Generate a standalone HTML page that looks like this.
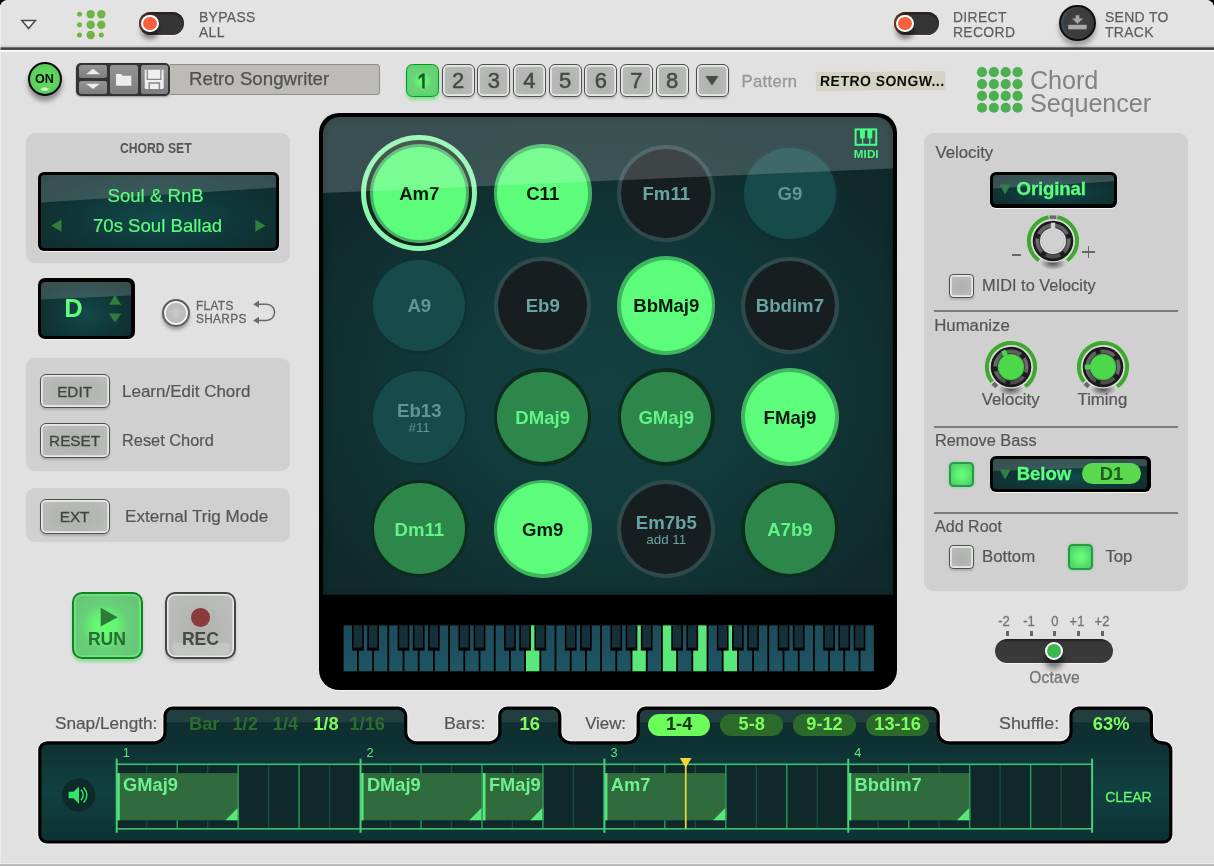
<!DOCTYPE html>
<html>
<head>
<meta charset="utf-8">
<title>Chord Sequencer</title>
<style>
*{box-sizing:border-box;margin:0;padding:0}
html,body{width:1214px;height:866px;overflow:hidden;background:#000;font-family:"Liberation Sans",sans-serif;}
#win{will-change:transform;transform:translateZ(0);position:absolute;left:0;top:0;width:1214px;height:866px;background:#e1e1e1;border-radius:8px 8px 0 0;overflow:hidden}
.a{position:absolute}
.t{position:absolute;line-height:1;white-space:nowrap;transform-origin:0 50%}
.b{font-weight:bold}
/* top bar */
#topbar{left:0;top:0;width:1214px;height:48px;background:linear-gradient(#e3e3e3 0,#e2e2e2 93.5%,#c9c9c9 97.5%,#a0a0a0 100%)}
#topline{left:0;top:47.3px;width:1214px;height:2.7px;background:linear-gradient(#8a8a8a,#464646 45%,#454545 80%,#555)}
#topline2{left:0;top:50px;width:1214px;height:2.2px;background:linear-gradient(#fff,#fbfbfb 70%,#ececec)}
.tog{width:45px;height:23px;border-radius:12px;background:#353535;box-shadow:0 1px 0 #f5f5f5,inset 2.5px 0 2.5px rgba(190,70,40,.45),inset 0 2px 2px rgba(0,0,0,.5)}
.togk{width:17.6px;height:17.6px;border-radius:50%;background:#f4623f;border:2.2px solid #fff;box-shadow:0 7px 5px rgba(0,0,0,.45)}
.toptx{font-size:14.8px;color:#5e5e5e;-webkit-text-stroke:.25px #5e5e5e;letter-spacing:.35px;line-height:15.2px;transform:scaleX(.94);margin-top:-.5px}
/* gray boxes */
.box{background:#d0d0d0;border-radius:9px}
.lbl{font-size:16.8px;color:#555;margin-top:1.3px;-webkit-text-stroke:.2px #555}
/* light buttons */
.btn{border:1.8px solid #4e4e4e;border-radius:6px;background:radial-gradient(ellipse at 50% 55%,#aeb2ad 0,#b7bab6 70%,#bcbfbb 100%);box-shadow:inset 0 0 0 1.7px #e9e9e9,0 2px 2px rgba(0,0,0,.16)}
.btn span{position:absolute;left:-1px;right:0;text-align:center;color:#434343;line-height:1;-webkit-text-stroke:.3px #434343}
/* LCD displays */
.lcd{background:#000;border-radius:6px;box-shadow:0 1px 0 #f4f4f4}
.lcd .in{position:absolute;border-radius:3px;overflow:hidden;background:radial-gradient(ellipse at 50% 60%,#12494a 0,#103536 55%,#0f2a2b 100%)}
.gloss{position:absolute;left:0;top:0;width:100%;height:100%;background:rgba(255,255,255,.17)}
.g{color:#5dfc7c}
.sn{font-size:18.3px;color:#2b6e2c;margin-top:-.4px}
.gbtn{border-radius:4.5px;border:2.3px solid #28994a;background:radial-gradient(circle at 50% 50%,#6aff78 0,#5ff273 35%,#52d669 75%,#4ed066 100%);box-shadow:0 0 2.5px rgba(70,220,100,.8)}
.pb{border-radius:2.5px;background:linear-gradient(#949494,#7e7e7e)}
</style>
</head>
<body>
<div id="win">
<!-- TOPBAR -->
<div class="a" id="topbar"></div>
<div class="a" id="topline"></div>
<div class="a" id="topline2"></div>
<svg class="a" style="left:20px;top:19px" width="18" height="12" viewBox="0 0 18 12"><path d="M1.8 1.5 L15.4 1.5 L8.6 9.6 Z" fill="#f4f4f4" stroke="#4a4a4a" stroke-width="1.5" stroke-linejoin="miter"/></svg>
<svg class="a" style="left:74px;top:8px" width="34" height="34" viewBox="0 0 34 34" id="toplogo">
<g fill="#6fb544">
<circle cx="5.5" cy="6.3" r="2.5"/><circle cx="16.7" cy="6.3" r="4.2"/><circle cx="27.3" cy="6.3" r="4.2"/>
<circle cx="5.5" cy="16.7" r="2.5"/><circle cx="16.7" cy="16.7" r="4.2"/><circle cx="27.3" cy="16.7" r="4.2"/>
<circle cx="5.5" cy="27" r="2.5"/><circle cx="16.7" cy="27" r="4.2"/><circle cx="27.3" cy="27" r="2.5"/>
</g></svg>
<div class="a tog" style="left:139px;top:11.5px"></div>
<div class="a togk" style="left:141.4px;top:14.7px"></div>
<div class="t toptx" style="left:199px;top:10.4px">BYPASS<br>ALL</div>
<div class="a tog" style="left:894px;top:11.5px"></div>
<div class="a togk" style="left:896.4px;top:14.7px"></div>
<div class="t toptx" style="left:953px;top:10.4px">DIRECT<br>RECORD</div>
<div class="a" style="left:1059.4px;top:4.6px;width:36.2px;height:36.2px;border-radius:50%;background:radial-gradient(circle at 50% 45%,#454545 0,#3a3a3a 60%,#333 100%);border:2.4px solid #0e0e0e;box-shadow:inset 2px 0 3px rgba(90,120,170,.38),0 5px 5px rgba(0,0,0,.3)"></div>
<svg class="a" style="left:1066px;top:13px" width="24" height="18" viewBox="0 0 24 18"><path d="M9.7 2.2h3.6v3.3h3.7l-5.5 5.2-5.5-5.2h3.7z" fill="#a9a9a9"/><rect x="2.2" y="11.8" width="18.5" height="4.5" fill="#a9a9a9"/></svg>
<div class="t toptx" style="left:1105.4px;top:10.4px">SEND TO<br>TRACK</div>

<div class="a" style="left:0;top:0;width:1.2px;height:866px;background:rgba(255,255,255,.45)"></div>
<!--HEADER-->
<div class="a" style="left:27.8px;top:61.7px;width:34.1px;height:34.1px;border-radius:50%;border:2.5px solid #080808;background:radial-gradient(ellipse 5px 2.3px at 49% 84%,rgba(255,255,255,.85) 0,rgba(255,255,255,.6) 60%,rgba(255,255,255,0) 100%),radial-gradient(circle at 50% 50%,#60da60 0,#5cd45c 55%,#52c452 78%,#49b449 100%);box-shadow:0 5px 5px rgba(0,0,0,.38)"></div>
<div class="t b" style="left:35.2px;top:72.3px;font-size:13.6px;color:#080808;transform:scaleX(.925)">ON</div>
<div class="a" style="left:76.3px;top:63.1px;width:94px;height:32.8px;border-radius:5px;background:#333;box-shadow:0 1px 2px rgba(0,0,0,.35)"></div>
<div class="a pb" style="left:79px;top:65.3px;width:27.8px;height:12.8px"></div>
<div class="a pb" style="left:79px;top:80.8px;width:27.8px;height:12.8px"></div>
<div class="a pb" style="left:110px;top:65.3px;width:28px;height:28.3px"></div>
<div class="a pb" style="left:140.8px;top:65.3px;width:27.6px;height:28.3px"></div>
<svg class="a" style="left:76px;top:63px" width="94" height="33" viewBox="0 0 94 33">
<path d="M10 11.2 L17 5.8 L24 11.2 Z" fill="#ececec"/><path d="M10 20.8 L24 20.8 L17 26 Z" fill="#ececec"/>
<path d="M40 11 h5.2 l1.6 1.8 h8.5 v10 h-15.3 z" fill="#ececec"/>
<path d="M68.7 6.8 H87.7 V24.4 Q87.7 26.1 86 26.1 H70.4 Q68.7 26.1 68.7 24.4 Z" fill="#efefef"/><path d="M71.3 6.6 V16.4 H84.9 V6.6" fill="none" stroke="#888" stroke-width="1.3"/><path d="M73.2 26.3 V20 H83.4 V26.3" fill="none" stroke="#888" stroke-width="1.5"/>
</svg>
<div class="a" style="left:169.8px;top:63.7px;width:210.2px;height:31.4px;background:#bcbbb7;border:1.2px solid #8e8e8c;border-left:none;border-radius:0 3.5px 3.5px 0"></div>
<div class="t" style="left:189px;top:70.1px;font-size:18.7px;color:#515151;-webkit-text-stroke:.25px #515151">Retro Songwriter</div>
<div class="a" style="left:405.8px;top:63.5px;width:33.2px;height:33.5px;border-radius:6.5px;border:1.9px solid #1e8535;background:radial-gradient(circle at 50% 52%,#66ff72 0,#63f86f 18%,#68d578 42%,#6bc67a 100%);box-shadow:inset 0 0 0 1.6px #45e262,0 3px 3px rgba(80,230,100,.65)"></div>
<svg class="a" style="left:414px;top:70px" width="16" height="20" viewBox="0 0 16 20"><path d="M8.1 3.6 H10.7 V18.4 H8.1 V6.8 L4.6 9.4 V6.4 Z" fill="#1d5a2a"/></svg>
<div class="a btn" style="left:441.65px;top:63.6px;width:33px;height:33.4px"></div>
<div class="t" style="left:441.65px;width:33px;text-align:center;top:69.8px;font-size:22px;color:#484848;-webkit-text-stroke:.45px #444">2</div>
<div class="a btn" style="left:477.3px;top:63.6px;width:33px;height:33.4px"></div>
<div class="t" style="left:477.3px;width:33px;text-align:center;top:69.8px;font-size:22px;color:#484848;-webkit-text-stroke:.45px #444">3</div>
<div class="a btn" style="left:512.95px;top:63.6px;width:33px;height:33.4px"></div>
<div class="t" style="left:512.95px;width:33px;text-align:center;top:69.8px;font-size:22px;color:#484848;-webkit-text-stroke:.45px #444">4</div>
<div class="a btn" style="left:548.6px;top:63.6px;width:33px;height:33.4px"></div>
<div class="t" style="left:548.6px;width:33px;text-align:center;top:69.8px;font-size:22px;color:#484848;-webkit-text-stroke:.45px #444">5</div>
<div class="a btn" style="left:584.25px;top:63.6px;width:33px;height:33.4px"></div>
<div class="t" style="left:584.25px;width:33px;text-align:center;top:69.8px;font-size:22px;color:#484848;-webkit-text-stroke:.45px #444">6</div>
<div class="a btn" style="left:619.9px;top:63.6px;width:33px;height:33.4px"></div>
<div class="t" style="left:619.9px;width:33px;text-align:center;top:69.8px;font-size:22px;color:#484848;-webkit-text-stroke:.45px #444">7</div>
<div class="a btn" style="left:655.55px;top:63.6px;width:33px;height:33.4px"></div>
<div class="t" style="left:655.55px;width:33px;text-align:center;top:69.8px;font-size:22px;color:#484848;-webkit-text-stroke:.45px #444">8</div>
<div class="a btn" style="left:695.8px;top:63.6px;width:32.8px;height:33.4px"></div>
<svg class="a" style="left:703px;top:75px" width="18" height="12" viewBox="0 0 18 12"><path d="M2.4 1 L15.6 1 L9 10.6 Z" fill="#4a4a4a"/></svg>
<div class="t" style="left:741.5px;top:73.8px;font-size:16.6px;color:#979797;letter-spacing:.35px;-webkit-text-stroke:.3px #979797">Pattern</div>
<div class="a" style="left:816.4px;top:71.6px;width:129.4px;height:18px;background:#d5d3c1;transform:rotate(-.4deg);box-shadow:0 0 1px #c8c6b4"></div>
<div class="t b" id="tape" style="left:819.6px;top:74.1px;font-size:14.6px;color:#0b0b0b;letter-spacing:.5px;transform:scaleX(.958) skewX(-3deg)">RETRO SONGW...</div>
<svg class="a" style="left:975px;top:65px" width="50" height="50" viewBox="0 0 50 50"><g fill="#4caf50">
<circle cx="7.00" cy="7.20" r="5.1"/><circle cx="18.85" cy="7.20" r="5.1"/><circle cx="30.70" cy="7.20" r="5.1"/><circle cx="42.55" cy="7.20" r="5.1"/><circle cx="7.00" cy="19.05" r="5.1"/><circle cx="18.85" cy="19.05" r="5.1"/><circle cx="30.70" cy="19.05" r="5.1"/><circle cx="42.55" cy="19.05" r="5.1"/><circle cx="7.00" cy="30.90" r="5.1"/><circle cx="18.85" cy="30.90" r="5.1"/><circle cx="30.70" cy="30.90" r="5.1"/><circle cx="42.55" cy="30.90" r="5.1"/><circle cx="7.00" cy="42.75" r="5.1"/><circle cx="18.85" cy="42.75" r="5.1"/><circle cx="30.70" cy="42.75" r="5.1"/><circle cx="42.55" cy="42.75" r="5.1"/></g></svg>
<div class="t" style="left:1030px;top:68.6px;font-size:25.2px;color:#828282;line-height:23.6px;letter-spacing:-.1px">Chord<br>Sequencer</div>
<!--LEFT-->
<div class="a box" style="left:25.8px;top:133px;width:264.6px;height:130px"></div>
<div class="t b" style="left:119.6px;top:141.3px;font-size:14px;color:#555;transform:scaleX(.868)">CHORD SET</div>
<div class="a lcd" style="left:38px;top:171.6px;width:240.8px;height:79.8px"><div class="in" style="left:3.2px;top:3.2px;right:3.2px;bottom:3.2px"><svg class="a" style="left:0;top:0" width="235" height="74" viewBox="0 0 235 74"><path d="M0 0 H235 V12.5 L0 27.6 Z" fill="#fff" fill-opacity=".17"/></svg></div></div>
<div class="t g" style="left:35.2px;width:240.8px;text-align:center;top:187.2px;font-size:18.6px;-webkit-text-stroke:.2px #5dfc7c">Soul &amp; RnB</div>
<div class="t g" style="left:37.2px;width:240.8px;text-align:center;top:217.2px;font-size:18.6px;-webkit-text-stroke:.2px #5dfc7c">70s Soul Ballad</div>
<svg class="a" style="left:50px;top:218px" width="14" height="16" viewBox="0 0 14 16"><path d="M11.5 1.6 V13.8 L1.2 7.7 Z" fill="#2f7f3d"/></svg>
<svg class="a" style="left:253px;top:218px" width="14" height="16" viewBox="0 0 14 16"><path d="M2.3 1.6 V13.8 L12.6 7.7 Z" fill="#2f7f3d"/></svg>

<div class="a lcd" style="left:38px;top:278.4px;width:96.6px;height:61px;border-radius:7px"><div class="in" style="left:3.4px;top:3.4px;right:3.4px;bottom:3.4px;border-radius:4px"><svg class="a" style="left:0;top:0" width="90" height="55" viewBox="0 0 90 55"><path d="M0 0 H90 V13.6 L0 17.4 Z" fill="#fff" fill-opacity=".17"/></svg></div></div>
<div class="t b g" style="left:64.2px;top:296px;font-size:25.6px">D</div>
<svg class="a" style="left:107px;top:294px" width="16" height="32" viewBox="0 0 16 32"><path d="M1.8 10.8 H14.2 L8 1 Z" fill="#2f7f3d"/><path d="M1.8 19.6 H14.2 L8 28.6 Z" fill="#2f7f3d"/></svg>
<div class="a" style="left:162px;top:298.5px;width:28.4px;height:28.4px;border-radius:50%;border:2px solid #5e5e5e;background:radial-gradient(circle at 50% 50%,#cfd0ce 0,#bcbfbb 35%,#b6b9b5 100%);box-shadow:inset 0 0 0 1.8px #f4f4f4,0 3px 3px rgba(0,0,0,.28)"></div>
<div class="t" style="left:196.2px;top:299.9px;font-size:12.6px;line-height:13.4px;color:#636363;letter-spacing:.35px;transform:scaleX(.94);-webkit-text-stroke:.3px #636363">FLATS<br>SHARPS</div>
<svg class="a" style="left:252px;top:298px" width="26" height="28" viewBox="0 0 26 28"><g fill="none" stroke="#6a6a6a" stroke-width="1.5"><path d="M3 6.2 H14.5 A8.1 8.1 0 0 1 14.5 22.4 H3"/></g><path d="M1.2 6.2 L7 2.6 V9.8 Z" fill="#6a6a6a"/><path d="M1.2 22.4 L7 18.8 V26 Z" fill="#6a6a6a"/></svg>

<div class="a box" style="left:25.8px;top:358.1px;width:264.6px;height:113.2px"></div>
<div class="a btn" style="left:40.1px;top:373.8px;width:70px;height:34.5px"><span style="top:9.1px;font-size:15.3px">EDIT</span></div>
<div class="t lbl" style="left:122px;top:382.8px;transform:scaleX(1.012)">Learn/Edit Chord</div>
<div class="a btn" style="left:40.1px;top:423.1px;width:70px;height:34.5px"><span style="top:9.1px;font-size:15.3px">RESET</span></div>
<div class="t lbl" style="left:122px;top:431.4px;transform:scaleX(.975)">Reset Chord</div>
<div class="a box" style="left:25.8px;top:488.1px;width:264.6px;height:54.2px"></div>
<div class="a btn" style="left:40.1px;top:499.1px;width:70px;height:34.5px"><span style="top:9.1px;font-size:15.3px">EXT</span></div>
<div class="t lbl" style="left:124.5px;top:507.4px;transform:scaleX(1.017)">External Trig Mode</div>

<div class="a" style="left:72.1px;top:591.8px;width:71px;height:67.4px;border-radius:10px;border:2px solid #1f7a2e;background:radial-gradient(circle at 46% 52%,#66ff72 0,#64f772 22%,#68cf78 48%,#6bbf7a 100%);box-shadow:inset 0 0 0 1.8px #5cf274,0 3px 3px rgba(90,220,110,.6)"></div>
<svg class="a" style="left:98px;top:605px" width="24" height="24" viewBox="0 0 24 24"><path d="M2.7 2.8 L19.6 12.2 L2.7 21.5 Z" fill="#2c7b3b"/></svg>
<div class="t b" style="left:87.9px;top:630.8px;font-size:17.6px;color:#2a6a37">RUN</div>
<div class="a" style="left:165.4px;top:591.8px;width:71px;height:67.4px;border-radius:10px;border:2px solid #464646;background:radial-gradient(circle at 48% 55%,#aeb1ad 0,#b6b9b5 45%,#bcbfbb 100%);box-shadow:inset 0 0 0 1.6px #e9e9e9,0 3px 3px rgba(0,0,0,.16)"></div>
<div class="a" style="left:171.5px;top:643px;width:58.5px;height:11.5px;border-radius:4px 4px 7px 7px;background:rgba(255,255,255,.18)"></div>
<div class="a" style="left:191.2px;top:608.1px;width:18.6px;height:18.6px;border-radius:50%;background:#8b3b3c"></div>
<div class="t b" style="left:181.9px;top:630.8px;font-size:17.6px;color:#484848">REC</div>
<!--PADS-->
<div class="a" style="left:319px;top:112.5px;width:577.5px;height:577.1px;border-radius:20px;background:#000;box-shadow:0 1px 0 #f6f6f6"></div>
<div class="a" id="padbg" style="left:322.5px;top:116.7px;width:570.9px;height:478.3px;border-radius:17px 17px 0 0;overflow:hidden;background:radial-gradient(ellipse 60% 58% at 50% 57%,#13413f 0,#123b3b 40%,#102a2c 100%);box-shadow:inset 0 0 5px 1px #0a1f21">
<div class="a" style="left:0;top:0">
<div class="a" style="left:38.8px;top:18.8px;width:116.0px;height:116.0px;border-radius:50%;background:#8df4b1"></div>
<div class="a" style="left:43.8px;top:23.8px;width:106.0px;height:106.0px;border-radius:50%;background:linear-gradient(#1d3a28,#0c2114)"></div>
<div class="a" style="left:47.0px;top:27.0px;width:99.6px;height:99.6px;border-radius:50%;background:#47b068"></div>
<div class="a" style="left:50.4px;top:30.4px;width:92.8px;height:92.8px;border-radius:50%;background:#5dfd7c"></div>
<div class="t b" style="left:36.8px;width:120px;text-align:center;top:68.6px;font-size:18.6px;color:#0d1a10">Am7</div>
<div class="a" style="left:171.1px;top:27.7px;width:98.2px;height:98.2px;border-radius:50%;background:#3eb75f"></div>
<div class="a" style="left:174.8px;top:31.4px;width:90.8px;height:90.8px;border-radius:50%;background:#5dfd7c"></div>
<div class="t b" style="left:160.2px;width:120px;text-align:center;top:68.6px;font-size:18.6px;color:#0d1a10">C11</div>
<div class="a" style="left:294.9px;top:28.0px;width:97.6px;height:97.6px;border-radius:50%;background:#2f4a4c"></div>
<div class="a" style="left:298.9px;top:32.0px;width:89.6px;height:89.6px;border-radius:50%;background:#161e20"></div>
<div class="t b" style="left:283.8px;width:120px;text-align:center;top:68.6px;font-size:18.6px;color:#69a3a3">Fm11</div>
<div class="a" style="left:419.2px;top:28.6px;width:96.4px;height:96.4px;border-radius:50%;background:#0f3133"></div>
<div class="a" style="left:421.5px;top:30.9px;width:91.8px;height:91.8px;border-radius:50%;background:#174a4a"></div>
<div class="t b" style="left:407.4px;width:120px;text-align:center;top:68.6px;font-size:18.6px;color:#5e9795">G9</div>
<div class="a" style="left:48.6px;top:140.6px;width:96.4px;height:96.4px;border-radius:50%;background:#0f3133"></div>
<div class="a" style="left:50.9px;top:142.9px;width:91.8px;height:91.8px;border-radius:50%;background:#174a4a"></div>
<div class="t b" style="left:36.8px;width:120px;text-align:center;top:180.6px;font-size:18.6px;color:#5e9795">A9</div>
<div class="a" style="left:171.4px;top:140.0px;width:97.6px;height:97.6px;border-radius:50%;background:#2f4a4c"></div>
<div class="a" style="left:175.4px;top:144.0px;width:89.6px;height:89.6px;border-radius:50%;background:#161e20"></div>
<div class="t b" style="left:160.2px;width:120px;text-align:center;top:180.6px;font-size:18.6px;color:#69a3a3">Eb9</div>
<div class="a" style="left:294.6px;top:139.7px;width:98.2px;height:98.2px;border-radius:50%;background:#3eb75f"></div>
<div class="a" style="left:298.4px;top:143.4px;width:90.8px;height:90.8px;border-radius:50%;background:#5dfd7c"></div>
<div class="t b" style="left:283.8px;width:120px;text-align:center;top:180.6px;font-size:18.6px;color:#0d1a10">BbMaj9</div>
<div class="a" style="left:418.6px;top:140.0px;width:97.6px;height:97.6px;border-radius:50%;background:#2f4a4c"></div>
<div class="a" style="left:422.6px;top:144.0px;width:89.6px;height:89.6px;border-radius:50%;background:#161e20"></div>
<div class="t b" style="left:407.4px;width:120px;text-align:center;top:180.6px;font-size:18.6px;color:#69a3a3">Bbdim7</div>
<div class="a" style="left:48.6px;top:252.2px;width:96.4px;height:96.4px;border-radius:50%;background:#0f3133"></div>
<div class="a" style="left:50.9px;top:254.5px;width:91.8px;height:91.8px;border-radius:50%;background:#174a4a"></div>
<div class="t b" style="left:36.8px;width:120px;text-align:center;top:285.7px;font-size:18.6px;color:#5e9795">Eb13</div>
<div class="t" style="left:36.8px;width:120px;text-align:center;top:304.7px;font-size:13.4px;color:#5e9795">#11</div>
<div class="a" style="left:171.5px;top:251.7px;width:97.4px;height:97.4px;border-radius:50%;background:#0c2c1e"></div>
<div class="a" style="left:174.9px;top:255.1px;width:90.6px;height:90.6px;border-radius:50%;background:#2d864a"></div>
<div class="t b" style="left:160.2px;width:120px;text-align:center;top:292.2px;font-size:18.6px;color:#62f585">DMaj9</div>
<div class="a" style="left:295.1px;top:251.7px;width:97.4px;height:97.4px;border-radius:50%;background:#0c2c1e"></div>
<div class="a" style="left:298.4px;top:255.1px;width:90.6px;height:90.6px;border-radius:50%;background:#2d864a"></div>
<div class="t b" style="left:283.8px;width:120px;text-align:center;top:292.2px;font-size:18.6px;color:#62f585">GMaj9</div>
<div class="a" style="left:418.3px;top:251.3px;width:98.2px;height:98.2px;border-radius:50%;background:#3eb75f"></div>
<div class="a" style="left:422.0px;top:255.0px;width:90.8px;height:90.8px;border-radius:50%;background:#5dfd7c"></div>
<div class="t b" style="left:407.4px;width:120px;text-align:center;top:292.2px;font-size:18.6px;color:#0d1a10">FMaj9</div>
<div class="a" style="left:48.1px;top:363.4px;width:97.4px;height:97.4px;border-radius:50%;background:#0c2c1e"></div>
<div class="a" style="left:51.5px;top:366.8px;width:90.6px;height:90.6px;border-radius:50%;background:#2d864a"></div>
<div class="t b" style="left:36.8px;width:120px;text-align:center;top:403.9px;font-size:18.6px;color:#62f585">Dm11</div>
<div class="a" style="left:171.1px;top:363.0px;width:98.2px;height:98.2px;border-radius:50%;background:#3eb75f"></div>
<div class="a" style="left:174.8px;top:366.7px;width:90.8px;height:90.8px;border-radius:50%;background:#5dfd7c"></div>
<div class="t b" style="left:160.2px;width:120px;text-align:center;top:403.9px;font-size:18.6px;color:#0d1a10">Gm9</div>
<div class="a" style="left:294.9px;top:363.3px;width:97.6px;height:97.6px;border-radius:50%;background:#2f4a4c"></div>
<div class="a" style="left:298.9px;top:367.3px;width:89.6px;height:89.6px;border-radius:50%;background:#161e20"></div>
<div class="t b" style="left:283.8px;width:120px;text-align:center;top:397.4px;font-size:18.6px;color:#69a3a3">Em7b5</div>
<div class="t" style="left:283.8px;width:120px;text-align:center;top:416.4px;font-size:13.4px;color:#69a3a3">add 11</div>
<div class="a" style="left:418.7px;top:363.4px;width:97.4px;height:97.4px;border-radius:50%;background:#0c2c1e"></div>
<div class="a" style="left:422.1px;top:366.8px;width:90.6px;height:90.6px;border-radius:50%;background:#2d864a"></div>
<div class="t b" style="left:407.4px;width:120px;text-align:center;top:403.9px;font-size:18.6px;color:#62f585">A7b9</div>
</div>
<svg class="a" style="left:0;top:0" width="571" height="481" viewBox="0 0 571 481"><path d="M0 0 H571 V51.4 L0 76 Z" fill="#fff" fill-opacity=".175"/></svg>
</div>
<svg class="a" style="left:853px;top:127px" width="26" height="20" viewBox="0 0 26 20"><rect x="2.6" y="2.4" width="20.6" height="15.4" fill="none" stroke="#46fd86" stroke-width="2"/><rect x="7" y="2.4" width="4.9" height="9" fill="#46fd86"/><rect x="14.4" y="2.4" width="4.9" height="9" fill="#46fd86"/><rect x="8.9" y="11" width="1.3" height="6.5" fill="#46fd86"/><rect x="16.2" y="11" width="1.3" height="6.5" fill="#46fd86"/></svg>
<div class="t b" style="left:853.8px;top:148.1px;font-size:11.6px;color:#46fd86;letter-spacing:.1px">MIDI</div>
<svg class="a" style="left:0;top:600px" width="1214" height="90" viewBox="0 600 1214 90"><defs><linearGradient id="wk" x1="0" y1="0" x2="0" y2="1"><stop offset="0" stop-color="#1d4b5a"/><stop offset="1" stop-color="#1f5563"/></linearGradient></defs>
<rect x="343.60" y="625.4" width="13.40" height="45.9" fill="url(#wk)"/><rect x="358.80" y="625.4" width="13.40" height="45.9" fill="url(#wk)"/><rect x="374.00" y="625.4" width="13.40" height="45.9" fill="url(#wk)"/><rect x="389.20" y="625.4" width="13.40" height="45.9" fill="url(#wk)"/><rect x="404.40" y="625.4" width="13.40" height="45.9" fill="url(#wk)"/><rect x="419.60" y="625.4" width="13.40" height="45.9" fill="url(#wk)"/><rect x="434.80" y="625.4" width="13.40" height="45.9" fill="url(#wk)"/><rect x="450.00" y="625.4" width="13.40" height="45.9" fill="url(#wk)"/><rect x="465.20" y="625.4" width="13.40" height="45.9" fill="url(#wk)"/><rect x="480.40" y="625.4" width="13.40" height="45.9" fill="url(#wk)"/><rect x="495.60" y="625.4" width="13.40" height="45.9" fill="url(#wk)"/><rect x="510.80" y="625.4" width="13.40" height="45.9" fill="url(#wk)"/><rect x="526.00" y="625.4" width="13.40" height="45.9" fill="#5be87a"/><rect x="541.20" y="625.4" width="13.40" height="45.9" fill="url(#wk)"/><rect x="556.40" y="625.4" width="13.40" height="45.9" fill="url(#wk)"/><rect x="571.60" y="625.4" width="13.40" height="45.9" fill="url(#wk)"/><rect x="586.80" y="625.4" width="13.40" height="45.9" fill="url(#wk)"/><rect x="602.00" y="625.4" width="13.40" height="45.9" fill="url(#wk)"/><rect x="617.20" y="625.4" width="13.40" height="45.9" fill="url(#wk)"/><rect x="632.40" y="625.4" width="13.40" height="45.9" fill="#5be87a"/><rect x="647.60" y="625.4" width="13.40" height="45.9" fill="url(#wk)"/><rect x="662.80" y="625.4" width="13.40" height="45.9" fill="#5be87a"/><rect x="678.00" y="625.4" width="13.40" height="45.9" fill="url(#wk)"/><rect x="693.20" y="625.4" width="13.40" height="45.9" fill="#5be87a"/><rect x="708.40" y="625.4" width="13.40" height="45.9" fill="url(#wk)"/><rect x="723.60" y="625.4" width="13.40" height="45.9" fill="#5be87a"/><rect x="738.80" y="625.4" width="13.40" height="45.9" fill="url(#wk)"/><rect x="754.00" y="625.4" width="13.40" height="45.9" fill="url(#wk)"/><rect x="769.20" y="625.4" width="13.40" height="45.9" fill="url(#wk)"/><rect x="784.40" y="625.4" width="13.40" height="45.9" fill="url(#wk)"/><rect x="799.60" y="625.4" width="13.40" height="45.9" fill="url(#wk)"/><rect x="814.80" y="625.4" width="13.40" height="45.9" fill="url(#wk)"/><rect x="830.00" y="625.4" width="13.40" height="45.9" fill="url(#wk)"/><rect x="845.20" y="625.4" width="13.40" height="45.9" fill="url(#wk)"/><rect x="860.40" y="625.4" width="13.40" height="45.9" fill="url(#wk)"/>
<rect x="352.05" y="625.4" width="11.7" height="25.2" fill="#000"/><rect x="353.65" y="625.4" width="8.5" height="22.2" fill="#16303a"/><rect x="367.25" y="625.4" width="11.7" height="25.2" fill="#000"/><rect x="368.85" y="625.4" width="8.5" height="22.2" fill="#16303a"/><rect x="397.65" y="625.4" width="11.7" height="25.2" fill="#000"/><rect x="399.25" y="625.4" width="8.5" height="22.2" fill="#16303a"/><rect x="412.85" y="625.4" width="11.7" height="25.2" fill="#000"/><rect x="414.45" y="625.4" width="8.5" height="22.2" fill="#16303a"/><rect x="428.05" y="625.4" width="11.7" height="25.2" fill="#000"/><rect x="429.65" y="625.4" width="8.5" height="22.2" fill="#16303a"/><rect x="458.45" y="625.4" width="11.7" height="25.2" fill="#000"/><rect x="460.05" y="625.4" width="8.5" height="22.2" fill="#16303a"/><rect x="473.65" y="625.4" width="11.7" height="25.2" fill="#000"/><rect x="475.25" y="625.4" width="8.5" height="22.2" fill="#16303a"/><rect x="504.05" y="625.4" width="11.7" height="25.2" fill="#000"/><rect x="505.65" y="625.4" width="8.5" height="22.2" fill="#16303a"/><rect x="519.25" y="625.4" width="11.7" height="25.2" fill="#000"/><rect x="520.85" y="625.4" width="8.5" height="22.2" fill="#16303a"/><rect x="534.45" y="625.4" width="11.7" height="25.2" fill="#000"/><rect x="536.05" y="625.4" width="8.5" height="22.2" fill="#16303a"/><rect x="564.85" y="625.4" width="11.7" height="25.2" fill="#000"/><rect x="566.45" y="625.4" width="8.5" height="22.2" fill="#16303a"/><rect x="580.05" y="625.4" width="11.7" height="25.2" fill="#000"/><rect x="581.65" y="625.4" width="8.5" height="22.2" fill="#16303a"/><rect x="610.45" y="625.4" width="11.7" height="25.2" fill="#000"/><rect x="612.05" y="625.4" width="8.5" height="22.2" fill="#16303a"/><rect x="625.65" y="625.4" width="11.7" height="25.2" fill="#000"/><rect x="627.25" y="625.4" width="8.5" height="22.2" fill="#16303a"/><rect x="640.85" y="625.4" width="11.7" height="25.2" fill="#000"/><rect x="642.45" y="625.4" width="8.5" height="22.2" fill="#16303a"/><rect x="671.25" y="625.4" width="11.7" height="25.2" fill="#000"/><rect x="672.85" y="625.4" width="8.5" height="22.2" fill="#16303a"/><rect x="686.45" y="625.4" width="11.7" height="25.2" fill="#000"/><rect x="688.05" y="625.4" width="8.5" height="22.2" fill="#16303a"/><rect x="716.85" y="625.4" width="11.7" height="25.2" fill="#000"/><rect x="718.45" y="625.4" width="8.5" height="22.2" fill="#16303a"/><rect x="732.05" y="625.4" width="11.7" height="25.2" fill="#000"/><rect x="733.65" y="625.4" width="8.5" height="22.2" fill="#16303a"/><rect x="747.25" y="625.4" width="11.7" height="25.2" fill="#000"/><rect x="748.85" y="625.4" width="8.5" height="22.2" fill="#16303a"/><rect x="777.65" y="625.4" width="11.7" height="25.2" fill="#000"/><rect x="779.25" y="625.4" width="8.5" height="22.2" fill="#16303a"/><rect x="792.85" y="625.4" width="11.7" height="25.2" fill="#000"/><rect x="794.45" y="625.4" width="8.5" height="22.2" fill="#16303a"/><rect x="823.25" y="625.4" width="11.7" height="25.2" fill="#000"/><rect x="824.85" y="625.4" width="8.5" height="22.2" fill="#16303a"/><rect x="838.45" y="625.4" width="11.7" height="25.2" fill="#000"/><rect x="840.05" y="625.4" width="8.5" height="22.2" fill="#16303a"/><rect x="853.65" y="625.4" width="11.7" height="25.2" fill="#000"/><rect x="855.25" y="625.4" width="8.5" height="22.2" fill="#16303a"/></svg>
<!--RIGHT-->
<div class="a box" style="left:924px;top:132.6px;width:264px;height:458.6px"></div>
<div class="t lbl" style="left:935.4px;top:143.6px">Velocity</div>
<div class="a lcd" style="left:989.6px;top:171.6px;width:127.4px;height:36px"><div class="in" style="left:3.2px;top:3.2px;right:3.2px;bottom:3.2px"><svg class="a" style="left:0;top:0" width="121" height="30" viewBox="0 0 121 30"><path d="M0 0 H121 V6.3 L0 13.6 Z" fill="#fff" fill-opacity=".17"/></svg></div></div>
<svg class="a" style="left:998px;top:183px" width="14" height="13" viewBox="0 0 14 13"><path d="M1.6 1.6 H12.7 L7.1 11.6 Z" fill="#2f7f4a"/></svg>
<div class="t b g" style="left:1016.6px;top:180.2px;font-size:18.6px;letter-spacing:-.15px;-webkit-text-stroke:.3px #5dfc7c">Original</div>
<svg class="a" style="left:1021.2px;top:209.4px" width="64" height="72" viewBox="-32 -32 64 72"><defs><radialGradient id="ksa"><stop offset="0" stop-color="#000" stop-opacity=".6"/><stop offset=".5" stop-color="#000" stop-opacity=".3"/><stop offset="1" stop-color="#000" stop-opacity="0"/></radialGradient><linearGradient id="kra" x1="0" y1="0" x2="0" y2="1"><stop offset="0" stop-color="#5d5d5d"/><stop offset=".5" stop-color="#6e6e6e"/><stop offset="1" stop-color="#4a4a4a"/></linearGradient></defs><ellipse cx="0" cy="22.5" rx="13" ry="6.5" fill="url(#ksa)"/><path d="M-14.17 19.50 A24.1 24.1 0 0 1 -4.39 -23.70" fill="none" stroke="#3fa92f" stroke-width="4"/><path d="M4.39 -23.70 A24.1 24.1 0 0 1 14.17 19.50" fill="none" stroke="#3fa92f" stroke-width="4"/><rect x="-3.4" y="-25.6" width="6.8" height="3.7" fill="#6a6a6a"/><circle r="21.4" fill="#dedede"/><circle r="20.3" fill="#1a1a1a"/><circle r="17.6" fill="url(#kra)"/><rect x="-2.4" y="-18" width="4.8" height="5" fill="#1c1c1c" transform="rotate(72)"/><rect x="-2.4" y="-18" width="4.8" height="5" fill="#1c1c1c" transform="rotate(144)"/><rect x="-2.4" y="-18" width="4.8" height="5" fill="#1c1c1c" transform="rotate(216)"/><rect x="-2.4" y="-18" width="4.8" height="5" fill="#1c1c1c" transform="rotate(288)"/><circle r="14" fill="#3c3c3c"/><rect x="-2.2" y="-18.3" width="4.4" height="7" fill="#d2d2d2" transform="rotate(0)"/><circle r="13" fill="#dcdcdc"/><circle r="11.6" fill="#c4c4c4"/><circle r="10.7" fill="#d0d0d0"/></svg>
<div class="a" style="left:1012.4px;top:254.2px;width:8.2px;height:1.7px;background:#666"></div>
<div class="a" style="left:1082.4px;top:251.1px;width:12.2px;height:1.7px;background:#666"></div><div class="a" style="left:1087.65px;top:245.8px;width:1.7px;height:12.2px;background:#666"></div>
<div class="a btn" style="left:949.4px;top:273.5px;width:24.6px;height:24.6px;border-radius:4px"></div>
<div class="t lbl" style="left:982px;top:277.1px;transform:scaleX(.975)">MIDI to Velocity</div>
<div class="a" style="left:933.8px;top:310.4px;width:244.2px;height:1.6px;background:#7c7c7c"></div>
<div class="t lbl" style="left:934.2px;top:316.5px">Humanize</div>
<svg class="a" style="left:978.8px;top:334.8px" width="64" height="72" viewBox="-32 -32 64 72"><defs><radialGradient id="ksb"><stop offset="0" stop-color="#000" stop-opacity=".6"/><stop offset=".5" stop-color="#000" stop-opacity=".3"/><stop offset="1" stop-color="#000" stop-opacity="0"/></radialGradient><linearGradient id="krb" x1="0" y1="0" x2="0" y2="1"><stop offset="0" stop-color="#5d5d5d"/><stop offset=".5" stop-color="#6e6e6e"/><stop offset="1" stop-color="#4a4a4a"/></linearGradient></defs><ellipse cx="0" cy="22.5" rx="13" ry="6.5" fill="url(#ksb)"/><path d="M-18.99 14.84 A24.1 24.1 0 1 1 14.17 19.50" fill="none" stroke="#3fa92f" stroke-width="4"/><rect x="-2.6" y="-26.2" width="5.2" height="4.2" fill="#6a6a6a" transform="rotate(-138)"/><circle r="21.4" fill="#dedede"/><circle r="20.3" fill="#1a1a1a"/><circle r="17.6" fill="url(#krb)"/><rect x="-2.4" y="-18" width="4.8" height="5" fill="#1c1c1c" transform="rotate(47)"/><rect x="-2.4" y="-18" width="4.8" height="5" fill="#1c1c1c" transform="rotate(119)"/><rect x="-2.4" y="-18" width="4.8" height="5" fill="#1c1c1c" transform="rotate(191)"/><rect x="-2.4" y="-18" width="4.8" height="5" fill="#1c1c1c" transform="rotate(263)"/><circle r="14" fill="#3c3c3c"/><rect x="-2.3" y="-18.3" width="4.6" height="7" fill="#49d649" transform="rotate(-25)"/><circle r="13.1" fill="#43cc43"/><circle r="11.8" fill="#4edb4e"/><circle r="10.6" fill="#4bd84b"/></svg>
<svg class="a" style="left:1070.5px;top:334.8px" width="64" height="72" viewBox="-32 -32 64 72"><defs><radialGradient id="ksc"><stop offset="0" stop-color="#000" stop-opacity=".6"/><stop offset=".5" stop-color="#000" stop-opacity=".3"/><stop offset="1" stop-color="#000" stop-opacity="0"/></radialGradient><linearGradient id="krc" x1="0" y1="0" x2="0" y2="1"><stop offset="0" stop-color="#5d5d5d"/><stop offset=".5" stop-color="#6e6e6e"/><stop offset="1" stop-color="#4a4a4a"/></linearGradient></defs><ellipse cx="0" cy="22.5" rx="13" ry="6.5" fill="url(#ksc)"/><path d="M-18.99 14.84 A24.1 24.1 0 1 1 14.17 19.50" fill="none" stroke="#3fa92f" stroke-width="4"/><rect x="-2.6" y="-26.2" width="5.2" height="4.2" fill="#6a6a6a" transform="rotate(-138)"/><circle r="21.4" fill="#dedede"/><circle r="20.3" fill="#1a1a1a"/><circle r="17.6" fill="url(#krc)"/><rect x="-2.4" y="-18" width="4.8" height="5" fill="#1c1c1c" transform="rotate(-18)"/><rect x="-2.4" y="-18" width="4.8" height="5" fill="#1c1c1c" transform="rotate(54)"/><rect x="-2.4" y="-18" width="4.8" height="5" fill="#1c1c1c" transform="rotate(126)"/><rect x="-2.4" y="-18" width="4.8" height="5" fill="#1c1c1c" transform="rotate(198)"/><circle r="14" fill="#3c3c3c"/><rect x="-2.3" y="-18.3" width="4.6" height="7" fill="#49d649" transform="rotate(-90)"/><circle r="13.1" fill="#43cc43"/><circle r="11.8" fill="#4edb4e"/><circle r="10.6" fill="#4bd84b"/></svg>
<div class="t lbl" style="left:960.7px;width:100px;text-align:center;top:390.3px">Velocity</div>
<div class="t lbl" style="left:1052.4px;width:100px;text-align:center;top:390.3px">Timing</div>
<div class="a" style="left:933.8px;top:426.1px;width:244.2px;height:1.6px;background:#7c7c7c"></div>
<div class="t lbl" style="left:934.8px;top:431.5px;transform:scaleX(.972)">Remove Bass</div>
<div class="a gbtn" style="left:948.9px;top:461.5px;width:25.4px;height:25.2px"></div>
<div class="a lcd" style="left:989.6px;top:456px;width:161px;height:35.8px"><div class="in" style="left:3.2px;top:3.2px;right:3.2px;bottom:3.2px"><svg class="a" style="left:0;top:0" width="155" height="30" viewBox="0 0 155 30"><path d="M0 0 H155 V7 L0 12 Z" fill="#fff" fill-opacity=".17"/></svg></div></div>
<svg class="a" style="left:998px;top:467.6px" width="14" height="13" viewBox="0 0 14 13"><path d="M1.6 1.6 H12.7 L7.1 11.6 Z" fill="#2f7f4a"/></svg>
<div class="t b g" style="left:1016.8px;top:464.6px;font-size:18.6px;letter-spacing:-.1px;-webkit-text-stroke:.3px #5dfc7c">Below</div>
<div class="a" style="left:1081.9px;top:462.9px;width:59.4px;height:21.6px;border-radius:11px;background:#5ad84e"></div>
<div class="t b" style="left:1081.9px;width:59.4px;text-align:center;top:464.8px;font-size:18.4px;color:#1f5c22">D1</div>
<div class="a" style="left:933.8px;top:512px;width:244.2px;height:1.6px;background:#7c7c7c"></div>
<div class="t lbl" style="left:934.6px;top:517.4px;transform:scaleX(.957)">Add Root</div>
<div class="a btn" style="left:949.4px;top:544.5px;width:24.6px;height:24.6px;border-radius:4px"></div>
<div class="t lbl" style="left:982px;top:548.1px">Bottom</div>
<div class="a gbtn" style="left:1067.5px;top:544.4px;width:25.4px;height:25.2px"></div>
<div class="t lbl" style="left:1105.4px;top:548.1px">Top</div>
<div class="t" style="left:984px;width:40px;text-align:center;top:613.6px;font-size:14.6px;color:#747474;-webkit-text-stroke:.3px #747474;transform-origin:50% 50%;transform:scaleX(.9)">-2</div>
<div class="t" style="left:1009px;width:40px;text-align:center;top:613.6px;font-size:14.6px;color:#747474;-webkit-text-stroke:.3px #747474;transform-origin:50% 50%;transform:scaleX(.9)">-1</div>
<div class="t" style="left:1034.6px;width:40px;text-align:center;top:613.6px;font-size:14.6px;color:#747474;-webkit-text-stroke:.3px #747474;transform-origin:50% 50%;transform:scaleX(.9)">0</div>
<div class="t" style="left:1056.6px;width:40px;text-align:center;top:613.6px;font-size:14.6px;color:#747474;-webkit-text-stroke:.3px #747474;transform-origin:50% 50%;transform:scaleX(.9)">+1</div>
<div class="t" style="left:1082.4px;width:40px;text-align:center;top:613.6px;font-size:14.6px;color:#747474;-webkit-text-stroke:.3px #747474;transform-origin:50% 50%;transform:scaleX(.9)">+2</div>
<div class="a" style="left:1005.7px;top:630.5px;width:3.4px;height:5.2px;background:#666"></div>
<div class="a" style="left:1029.5px;top:630.5px;width:3.4px;height:5.2px;background:#666"></div>
<div class="a" style="left:1053.1px;top:630.5px;width:3.4px;height:5.2px;background:#666"></div>
<div class="a" style="left:1076.8px;top:630.5px;width:3.4px;height:5.2px;background:#666"></div>
<div class="a" style="left:1100.6px;top:630.5px;width:3.4px;height:5.2px;background:#666"></div>
<div class="a" style="left:994.9px;top:639.2px;width:118.3px;height:23.4px;border-radius:12px;background:linear-gradient(#1c1c1c 0,#383838 14%,#3b3b3b 100%);box-shadow:0 1px 0 #f2f2f2"></div>
<div class="a" style="left:1044.9px;top:642px;width:18.4px;height:18.4px;border-radius:50%;background:#3cb84b;border:2.2px solid #fff;box-shadow:0 9px 6px rgba(0,0,0,.5)"></div>
<div class="t" style="left:1029.2px;top:670.4px;font-size:15.6px;color:#747474;letter-spacing:.2px;-webkit-text-stroke:.3px #747474">Octave</div>
<!--SEQ-->
<svg class="a" style="left:0;top:700px" width="1214" height="150" viewBox="0 700 1214 150">
<defs>
<linearGradient id="sbg" x1="0" y1="0" x2="0" y2="1"><stop offset="0" stop-color="#0e2b2d"/><stop offset=".3" stop-color="#0f3234"/><stop offset=".62" stop-color="#104142"/><stop offset="1" stop-color="#0e3132"/></linearGradient>
<linearGradient id="sside" x1="0" y1="0" x2="1" y2="0"><stop offset="0" stop-color="#000" stop-opacity="0"/><stop offset=".07" stop-color="#000" stop-opacity="0"/><stop offset=".075" stop-color="#000" stop-opacity=".0"/><stop offset="1" stop-color="#000" stop-opacity="0"/></linearGradient>
<clipPath id="sclip"><path d="M47.20 744.40 L154.40 744.40 A12.20 12.20 0 0 0 166.60 732.20 L166.60 715.60 A5.80 5.80 0 0 1 172.40 709.80 L398.30 709.80 A5.80 5.80 0 0 1 404.10 715.60 L404.10 732.20 A12.20 12.20 0 0 0 416.30 744.40 L489.20 744.40 A12.20 12.20 0 0 0 501.40 732.20 L501.40 715.60 A5.80 5.80 0 0 1 507.20 709.80 L552.40 709.80 A5.80 5.80 0 0 1 558.20 715.60 L558.20 732.20 A12.20 12.20 0 0 0 570.40 744.40 L627.60 744.40 A12.20 12.20 0 0 0 639.80 732.20 L639.80 715.60 A5.80 5.80 0 0 1 645.60 709.80 L930.80 709.80 A5.80 5.80 0 0 1 936.60 715.60 L936.60 732.20 A12.20 12.20 0 0 0 948.80 744.40 L1060.40 744.40 A12.20 12.20 0 0 0 1072.60 732.20 L1072.60 715.60 A5.80 5.80 0 0 1 1078.40 709.80 L1144.00 709.80 A5.80 5.80 0 0 1 1149.80 715.60 L1149.80 732.20 A12.20 12.20 0 0 0 1162.00 744.40 L1163.40 744.40 A5.80 5.80 0 0 1 1169.20 750.20 L1169.20 834.60 A5.80 5.80 0 0 1 1163.40 840.40 L47.20 840.40 A5.80 5.80 0 0 1 41.40 834.60 L41.40 750.20 A5.80 5.80 0 0 1 47.20 744.40 Z"/></clipPath>
</defs>
<path d="M47.20 740.20 L154.40 740.20 A8.00 8.00 0 0 0 162.40 732.20 L162.40 715.60 A10.00 10.00 0 0 1 172.40 705.60 L398.30 705.60 A10.00 10.00 0 0 1 408.30 715.60 L408.30 732.20 A8.00 8.00 0 0 0 416.30 740.20 L489.20 740.20 A8.00 8.00 0 0 0 497.20 732.20 L497.20 715.60 A10.00 10.00 0 0 1 507.20 705.60 L552.40 705.60 A10.00 10.00 0 0 1 562.40 715.60 L562.40 732.20 A8.00 8.00 0 0 0 570.40 740.20 L627.60 740.20 A8.00 8.00 0 0 0 635.60 732.20 L635.60 715.60 A10.00 10.00 0 0 1 645.60 705.60 L930.80 705.60 A10.00 10.00 0 0 1 940.80 715.60 L940.80 732.20 A8.00 8.00 0 0 0 948.80 740.20 L1060.40 740.20 A8.00 8.00 0 0 0 1068.40 732.20 L1068.40 715.60 A10.00 10.00 0 0 1 1078.40 705.60 L1144.00 705.60 A10.00 10.00 0 0 1 1154.00 715.60 L1154.00 732.20 A8.00 8.00 0 0 0 1162.00 740.20 L1163.40 740.20 A10.00 10.00 0 0 1 1173.40 750.20 L1173.40 834.60 A10.00 10.00 0 0 1 1163.40 844.60 L47.20 844.60 A10.00 10.00 0 0 1 37.20 834.60 L37.20 750.20 A10.00 10.00 0 0 1 47.20 740.20 Z" fill="#f4f4f4"/>
<path d="M47.20 741.20 L154.40 741.20 A9.00 9.00 0 0 0 163.40 732.20 L163.40 715.60 A9.00 9.00 0 0 1 172.40 706.60 L398.30 706.60 A9.00 9.00 0 0 1 407.30 715.60 L407.30 732.20 A9.00 9.00 0 0 0 416.30 741.20 L489.20 741.20 A9.00 9.00 0 0 0 498.20 732.20 L498.20 715.60 A9.00 9.00 0 0 1 507.20 706.60 L552.40 706.60 A9.00 9.00 0 0 1 561.40 715.60 L561.40 732.20 A9.00 9.00 0 0 0 570.40 741.20 L627.60 741.20 A9.00 9.00 0 0 0 636.60 732.20 L636.60 715.60 A9.00 9.00 0 0 1 645.60 706.60 L930.80 706.60 A9.00 9.00 0 0 1 939.80 715.60 L939.80 732.20 A9.00 9.00 0 0 0 948.80 741.20 L1060.40 741.20 A9.00 9.00 0 0 0 1069.40 732.20 L1069.40 715.60 A9.00 9.00 0 0 1 1078.40 706.60 L1144.00 706.60 A9.00 9.00 0 0 1 1153.00 715.60 L1153.00 732.20 A9.00 9.00 0 0 0 1162.00 741.20 L1163.40 741.20 A9.00 9.00 0 0 1 1172.40 750.20 L1172.40 834.60 A9.00 9.00 0 0 1 1163.40 843.60 L47.20 843.60 A9.00 9.00 0 0 1 38.20 834.60 L38.20 750.20 A9.00 9.00 0 0 1 47.20 741.20 Z" fill="#000"/>
<path d="M47.20 744.40 L154.40 744.40 A12.20 12.20 0 0 0 166.60 732.20 L166.60 715.60 A5.80 5.80 0 0 1 172.40 709.80 L398.30 709.80 A5.80 5.80 0 0 1 404.10 715.60 L404.10 732.20 A12.20 12.20 0 0 0 416.30 744.40 L489.20 744.40 A12.20 12.20 0 0 0 501.40 732.20 L501.40 715.60 A5.80 5.80 0 0 1 507.20 709.80 L552.40 709.80 A5.80 5.80 0 0 1 558.20 715.60 L558.20 732.20 A12.20 12.20 0 0 0 570.40 744.40 L627.60 744.40 A12.20 12.20 0 0 0 639.80 732.20 L639.80 715.60 A5.80 5.80 0 0 1 645.60 709.80 L930.80 709.80 A5.80 5.80 0 0 1 936.60 715.60 L936.60 732.20 A12.20 12.20 0 0 0 948.80 744.40 L1060.40 744.40 A12.20 12.20 0 0 0 1072.60 732.20 L1072.60 715.60 A5.80 5.80 0 0 1 1078.40 709.80 L1144.00 709.80 A5.80 5.80 0 0 1 1149.80 715.60 L1149.80 732.20 A12.20 12.20 0 0 0 1162.00 744.40 L1163.40 744.40 A5.80 5.80 0 0 1 1169.20 750.20 L1169.20 834.60 A5.80 5.80 0 0 1 1163.40 840.40 L47.20 840.40 A5.80 5.80 0 0 1 41.40 834.60 L41.40 750.20 A5.80 5.80 0 0 1 47.20 744.40 Z" fill="url(#sbg)"/>
<g clip-path="url(#sclip)"><rect x="150" y="706" width="1020" height="16.4" fill="#fff" fill-opacity=".085"/></g>
<rect x="116.7" y="764.3" width="975.40" height="64.6" fill="#0f292b"/>
<rect x="116.70" y="773.1" width="121.92" height="47.2" fill="#2f6b3c"/><path d="M225.43 820.3 L238.62 807.1 V820.3 Z" fill="#5be87a"/><rect x="116.70" y="773.1" width="3" height="47.2" fill="#5be87a"/>
<rect x="360.55" y="773.1" width="121.93" height="47.2" fill="#2f6b3c"/><path d="M469.28 820.3 L482.48 807.1 V820.3 Z" fill="#5be87a"/><rect x="360.55" y="773.1" width="3" height="47.2" fill="#5be87a"/>
<rect x="482.48" y="773.1" width="60.96" height="47.2" fill="#2f6b3c"/><path d="M530.24 820.3 L543.44 807.1 V820.3 Z" fill="#5be87a"/><rect x="482.48" y="773.1" width="3" height="47.2" fill="#5be87a"/>
<rect x="604.40" y="773.1" width="121.92" height="47.2" fill="#2f6b3c"/><path d="M713.12 820.3 L726.32 807.1 V820.3 Z" fill="#5be87a"/><rect x="604.40" y="773.1" width="3" height="47.2" fill="#5be87a"/>
<rect x="848.25" y="773.1" width="121.92" height="47.2" fill="#2f6b3c"/><path d="M956.97 820.3 L970.17 807.1 V820.3 Z" fill="#5be87a"/><rect x="848.25" y="773.1" width="3" height="47.2" fill="#5be87a"/>
<rect x="145.98" y="764.3" width="1.4" height="8.8" fill="#1a4a40"/><rect x="145.98" y="820.3" width="1.4" height="8.2" fill="#1a4a40"/><rect x="176.46" y="764.3" width="1.4" height="8.8" fill="#2c9a5e"/><rect x="176.46" y="820.3" width="1.4" height="8.2" fill="#2c9a5e"/><rect x="206.94" y="764.3" width="1.4" height="8.8" fill="#1a4a40"/><rect x="206.94" y="820.3" width="1.4" height="8.2" fill="#1a4a40"/><rect x="237.43" y="764.3" width="1.4" height="64.2" fill="#2c9a5e"/><rect x="267.91" y="764.3" width="1.4" height="64.2" fill="#1a4a40"/><rect x="298.39" y="764.3" width="1.4" height="64.2" fill="#2c9a5e"/><rect x="328.87" y="764.3" width="1.4" height="64.2" fill="#1a4a40"/><rect x="389.83" y="764.3" width="1.4" height="8.8" fill="#1a4a40"/><rect x="389.83" y="820.3" width="1.4" height="8.2" fill="#1a4a40"/><rect x="420.31" y="764.3" width="1.4" height="8.8" fill="#2c9a5e"/><rect x="420.31" y="820.3" width="1.4" height="8.2" fill="#2c9a5e"/><rect x="450.79" y="764.3" width="1.4" height="8.8" fill="#1a4a40"/><rect x="450.79" y="820.3" width="1.4" height="8.2" fill="#1a4a40"/><rect x="481.28" y="764.3" width="1.4" height="64.2" fill="#2c9a5e"/><rect x="511.76" y="764.3" width="1.4" height="8.8" fill="#1a4a40"/><rect x="511.76" y="820.3" width="1.4" height="8.2" fill="#1a4a40"/><rect x="542.24" y="764.3" width="1.4" height="64.2" fill="#2c9a5e"/><rect x="572.72" y="764.3" width="1.4" height="64.2" fill="#1a4a40"/><rect x="633.68" y="764.3" width="1.4" height="8.8" fill="#1a4a40"/><rect x="633.68" y="820.3" width="1.4" height="8.2" fill="#1a4a40"/><rect x="664.16" y="764.3" width="1.4" height="8.8" fill="#2c9a5e"/><rect x="664.16" y="820.3" width="1.4" height="8.2" fill="#2c9a5e"/><rect x="694.64" y="764.3" width="1.4" height="8.8" fill="#1a4a40"/><rect x="694.64" y="820.3" width="1.4" height="8.2" fill="#1a4a40"/><rect x="725.12" y="764.3" width="1.4" height="64.2" fill="#2c9a5e"/><rect x="755.61" y="764.3" width="1.4" height="64.2" fill="#1a4a40"/><rect x="786.09" y="764.3" width="1.4" height="64.2" fill="#2c9a5e"/><rect x="816.57" y="764.3" width="1.4" height="64.2" fill="#1a4a40"/><rect x="877.53" y="764.3" width="1.4" height="8.8" fill="#1a4a40"/><rect x="877.53" y="820.3" width="1.4" height="8.2" fill="#1a4a40"/><rect x="908.01" y="764.3" width="1.4" height="8.8" fill="#2c9a5e"/><rect x="908.01" y="820.3" width="1.4" height="8.2" fill="#2c9a5e"/><rect x="938.49" y="764.3" width="1.4" height="8.8" fill="#1a4a40"/><rect x="938.49" y="820.3" width="1.4" height="8.2" fill="#1a4a40"/><rect x="968.97" y="764.3" width="1.4" height="64.2" fill="#2c9a5e"/><rect x="999.46" y="764.3" width="1.4" height="64.2" fill="#1a4a40"/><rect x="1029.94" y="764.3" width="1.4" height="64.2" fill="#2c9a5e"/><rect x="1060.42" y="764.3" width="1.4" height="64.2" fill="#1a4a40"/>
<rect x="116.7" y="763.5" width="975.40" height="1.6" fill="#3cc070"/><rect x="116.7" y="828.0" width="975.40" height="1.6" fill="#3cc070"/>
<rect x="115.70" y="758.6" width="2" height="74.2" fill="#45cf78"/><rect x="359.55" y="758.6" width="2" height="74.2" fill="#45cf78"/><rect x="603.40" y="758.6" width="2" height="74.2" fill="#45cf78"/><rect x="847.25" y="758.6" width="2" height="74.2" fill="#45cf78"/><rect x="1091.10" y="758.6" width="2" height="74.2" fill="#45cf78"/>
<rect x="684.9" y="762" width="1.7" height="66.5" fill="#f2d63a"/><path d="M679.8 758 H691.6 L685.7 767.6 Z" fill="#f5d83a"/>
<circle cx="78.8" cy="794.8" r="16.6" fill="#0c2a29"/><path d="M68.6 791.7 H73.5 L79 786.5 V804.1 L73.5 798.3 H68.6 Z" fill="#33e46b"/><path d="M81 789.8 Q85.6 795 81 800.2 M83.6 787.4 Q90.2 795 83.6 802.4" fill="none" stroke="#33e46b" stroke-width="1.5"/>
</svg>
<div class="t b" style="left:123.1px;top:776.4px;font-size:18.3px;color:#6ef28e">GMaj9</div>
<div class="t b" style="left:366.9px;top:776.4px;font-size:18.3px;color:#6ef28e">DMaj9</div>
<div class="t b" style="left:488.9px;top:776.4px;font-size:18.3px;color:#6ef28e">FMaj9</div>
<div class="t b" style="left:610.8px;top:776.4px;font-size:18.3px;color:#6ef28e">Am7</div>
<div class="t b" style="left:854.6px;top:776.4px;font-size:18.3px;color:#6ef28e">Bbdim7</div>
<div class="t" style="left:122.7px;top:747px;font-size:12.8px;color:#5be87a">1</div>
<div class="t" style="left:366.6px;top:747px;font-size:12.8px;color:#5be87a">2</div>
<div class="t" style="left:610.4px;top:747px;font-size:12.8px;color:#5be87a">3</div>
<div class="t" style="left:854.3px;top:747px;font-size:12.8px;color:#5be87a">4</div>
<div class="t" style="left:1105.2px;top:789.8px;font-size:14.2px;color:#64f66c;letter-spacing:-.2px;-webkit-text-stroke:.3px #64f66c">CLEAR</div>
<div class="t lbl" style="left:54.6px;top:714.4px;transform:scaleX(1.025)">Snap/Length:</div>
<div class="t lbl" style="left:443.7px;top:714.4px;transform:scaleX(1.06)">Bars:</div>
<div class="t lbl" style="left:585.2px;top:714.4px">View:</div>
<div class="t lbl" style="left:998.6px;top:714.4px;transform:scaleX(1.064)">Shuffle:</div>
<div class="t b sn" style="left:189px;top:715.2px">Bar</div>
<div class="t b sn" style="left:232.4px;top:715.2px">1/2</div>
<div class="t b sn" style="left:272.8px;top:715.2px">1/4</div>
<div class="t b sn" style="left:313.2px;top:715.2px;color:#7dfc5e">1/8</div>
<div class="t b sn" style="left:349.4px;top:715.2px">1/16</div>
<div class="t b" style="left:498.2px;width:63.2px;text-align:center;top:714.6px;font-size:18.4px;color:#7dfc5e">16</div>
<div class="t b" style="left:1069.4px;width:83.6px;text-align:center;top:714.6px;font-size:18.4px;color:#7dfc5e">63%</div>
<div class="a" style="left:647.8px;top:713.8px;width:62.7px;height:21.8px;border-radius:11px;background:#6cfc5c"></div><div class="t b" style="left:647.8px;width:62.7px;text-align:center;top:715.4px;font-size:18.2px;color:#12330f">1-4</div>
<div class="a" style="left:720.4px;top:713.8px;width:62.7px;height:21.8px;border-radius:11px;background:#2b6a2a"></div><div class="t b" style="left:720.4px;width:62.7px;text-align:center;top:715.4px;font-size:18.2px;color:#7dfc5e">5-8</div>
<div class="a" style="left:793.2px;top:713.8px;width:62.7px;height:21.8px;border-radius:11px;background:#2b6a2a"></div><div class="t b" style="left:793.2px;width:62.7px;text-align:center;top:715.4px;font-size:18.2px;color:#7dfc5e">9-12</div>
<div class="a" style="left:866.2px;top:713.8px;width:62.7px;height:21.8px;border-radius:11px;background:#2b6a2a"></div><div class="t b" style="left:866.2px;width:62.7px;text-align:center;top:715.4px;font-size:18.2px;color:#7dfc5e">13-16</div>
<div class="a" style="left:0;top:862.6px;width:1214px;height:1px;background:#efefef"></div>
<div class="a" style="left:0;top:863.6px;width:1214px;height:3px;background:linear-gradient(#c4c4c4,#a2a2a2)"></div>
</div>
</body>
</html>
